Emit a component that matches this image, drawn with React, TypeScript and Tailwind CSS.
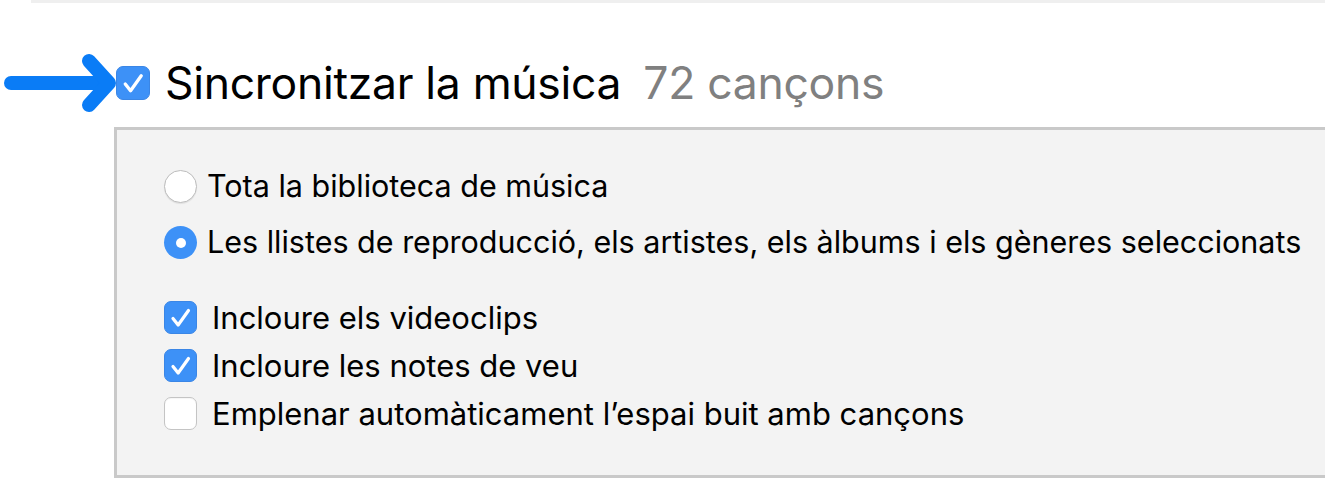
import React from "react";

const FONT = { fontFamily: "Inter, 'Liberation Sans', sans-serif" };

function Check() {
  return (
    <svg viewBox="0 0 33 33" className="block h-full w-full">
      <path
        d="M8.5 17.5 L14 24.5 L25 9"
        fill="none"
        stroke="white"
        strokeWidth="3.4"
        strokeLinecap="round"
        strokeLinejoin="round"
      />
    </svg>
  );
}

function Checkbox({ checked, size = 33 }: { checked: boolean; size?: number }) {
  return checked ? (
    <div
      className="shrink-0 rounded-[7px] border border-[#3a86e6] bg-[#3d91f7]"
      style={{ width: size, height: size }}
    >
      <Check />
    </div>
  ) : (
    <div
      className="shrink-0 rounded-[7px] border border-[#c4c4c4] bg-white shadow-[inset_0_1px_1px_rgba(0,0,0,0.04)]"
      style={{ width: size, height: size }}
    />
  );
}

function Radio({ selected }: { selected: boolean }) {
  return selected ? (
    <div className="flex h-[33px] w-[33px] shrink-0 items-center justify-center rounded-full bg-[#3d91f7]">
      <div className="h-[10px] w-[10px] rounded-full bg-white" />
    </div>
  ) : (
    <div className="h-[33px] w-[33px] shrink-0 rounded-full border border-[#bcbcbc] bg-white shadow-[0_1px_1px_rgba(0,0,0,0.08)]" />
  );
}

function Arrow() {
  return (
    <svg width="113" height="60" viewBox="0 0 113 60" className="shrink-0">
      <g
        fill="none"
        stroke="#0a7cf6"
        strokeWidth="14"
        strokeLinecap="round"
        strokeLinejoin="round"
      >
        <path d="M8 30 H104" />
        <path d="M86 8 L106 30 L86 52" />
      </g>
    </svg>
  );
}

export default function App() {
  return (
    <div className="h-[500px] w-[1327px] overflow-hidden bg-white text-black" style={FONT}>
      <div className="ml-[31px] h-[3px] w-[1294px] bg-[#efefef]" />

      <div className="mt-[50px] flex h-[60px] items-center pl-[3px]">
        <Arrow />
        <Checkbox checked size={34} />
        <div className="ml-[15px] text-[44.5px] leading-none tracking-[-0.3px]">
          Sincronitzar la música
        </div>
        <div className="ml-[22px] text-[44.5px] leading-none tracking-[-0.3px] text-[#808080]">
          72 cançons
        </div>
      </div>

      <div className="ml-[114px] mt-[14px] h-[351px] w-[1211px] border-y-[3px] border-l-[3px] border-[#c9c9c9] bg-[#f3f3f3] pl-[47px] pt-[40px]">
        <div className="flex flex-col gap-[23px] text-[30.5px] leading-none">
          <div className="flex items-center gap-[10px]">
            <Radio selected={false} />
            <span>Tota la biblioteca de música</span>
          </div>
          <div className="flex items-center gap-[10px]">
            <Radio selected />
            <span>Les llistes de reproducció, els artistes, els àlbums i els gèneres seleccionats</span>
          </div>
        </div>

        <div className="mt-[42px] flex flex-col gap-[15px] text-[31px] leading-none">
          <div className="flex items-center gap-[15px]">
            <Checkbox checked />
            <span>Incloure els videoclips</span>
          </div>
          <div className="flex items-center gap-[15px]">
            <Checkbox checked />
            <span>Incloure les notes de veu</span>
          </div>
          <div className="flex items-center gap-[15px]">
            <Checkbox checked={false} />
            <span>Emplenar automàticament l’espai buit amb cançons</span>
          </div>
        </div>
      </div>
    </div>
  );
}
